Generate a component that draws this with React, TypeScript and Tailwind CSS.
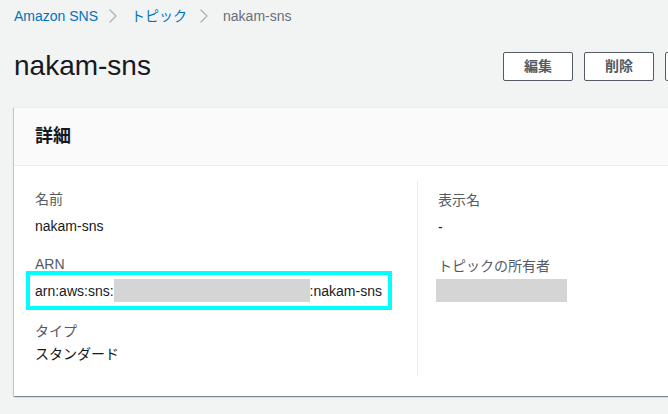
import { ChevronRight } from "lucide-react";

const font = {
  fontFamily: '"Liberation Sans", "Noto Sans CJK JP", sans-serif',
};

const Field = ({
  label,
  gap,
  children,
}: {
  label: string;
  gap: string;
  children: React.ReactNode;
}) => (
  <div className="flex flex-col">
    <div className="text-[14px] leading-[22px] text-[#545b64]">{label}</div>
    <div className={`text-[14px] leading-[22px] text-[#16191f] ${gap}`}>{children}</div>
  </div>
);

export default function App() {
  return (
    <div
      className="w-[668px] h-[414px] overflow-hidden bg-[#f2f3f3] pl-[14px]"
      style={font}
    >
      {/* breadcrumb */}
      <nav className="flex items-center h-[20px] mt-[6px] text-[14px] leading-[20px]">
        <span className="text-[#0073bb]">Amazon SNS</span>
        <ChevronRight className="ml-[3px] mr-[6px] text-[#aab7b8]" size={24} strokeWidth={1.4} />
        <span className="text-[#0073bb]">トピック</span>
        <ChevronRight className="ml-[5px] mr-[7px] text-[#aab7b8]" size={24} strokeWidth={1.4} />
        <span className="text-[#687078]">nakam-sns</span>
      </nav>

      {/* title row */}
      <div className="flex items-center justify-between h-[34px] mt-[23px]">
        <h1 className="text-[28px] leading-[34px] text-[#16191f]">nakam-sns</h1>
        <div className="flex gap-[11px] -mr-[67px] shrink-0">
          <button className="w-[70px] h-[29px] bg-white border border-[#545b64] rounded-[2px] text-[14px] font-bold text-[#545b64]">
            編集
          </button>
          <button className="w-[70px] h-[29px] bg-white border border-[#545b64] rounded-[2px] text-[14px] font-bold text-[#545b64]">
            削除
          </button>
          <button className="w-[70px] h-[29px] bg-white border border-[#545b64] rounded-[2px]" />
        </div>
      </div>

      {/* card */}
      <div className="mt-[24px] w-[700px] bg-white border-t border-[#eaeded] shadow-[0_1px_1px_0_rgba(0,28,36,0.3),1px_1px_1px_0_rgba(0,28,36,0.15),-1px_1px_1px_0_rgba(0,28,36,0.15)]">
        <div className="h-[58px] bg-[#fafafa] border-b border-[#eaeded] flex items-center pl-[21px]">
          <h2 className="text-[18px] font-bold text-[#16191f]">詳細</h2>
        </div>
        <div className="flex pt-[15px] pb-[20px]">
          <div className="w-[403px] pl-[21px] pt-[7px] flex flex-col">
            <Field label="名前" gap="mt-[5px]">
              nakam-sns
            </Field>
            <div className="mt-[16px]">
              <div className="text-[14px] leading-[22px] text-[#545b64]">ARN</div>
              <div className="-ml-[9px] -mt-[4px] w-[366px] border-[4px] border-[#00ffff] px-[5px] py-[4px] text-[14px] leading-[22px] text-[#16191f] flex items-center whitespace-nowrap">
                <span>arn:aws:sns:</span>
                <span className="inline-block w-[196px] h-[23px] bg-[#d5d5d5] shrink-0" />
                <span>:nakam-sns</span>
              </div>
            </div>
            <div className="mt-[10px]">
              <Field label="タイプ" gap="mt-[1px]">
                スタンダード
              </Field>
            </div>
          </div>
          <div className="border-l border-[#eaeded] pl-[20px] pt-[8px] h-[195px]">
            <Field label="表示名" gap="mt-[5px]">
              -
            </Field>
            <div className="mt-[17px]">
              <div className="text-[14px] leading-[22px] text-[#545b64]">トピックの所有者</div>
              <div className="w-[131px] h-[23px] bg-[#d5d5d5] -ml-[2px] mt-[2px]" />
            </div>
          </div>
        </div>
      </div>
    </div>
  );
}
